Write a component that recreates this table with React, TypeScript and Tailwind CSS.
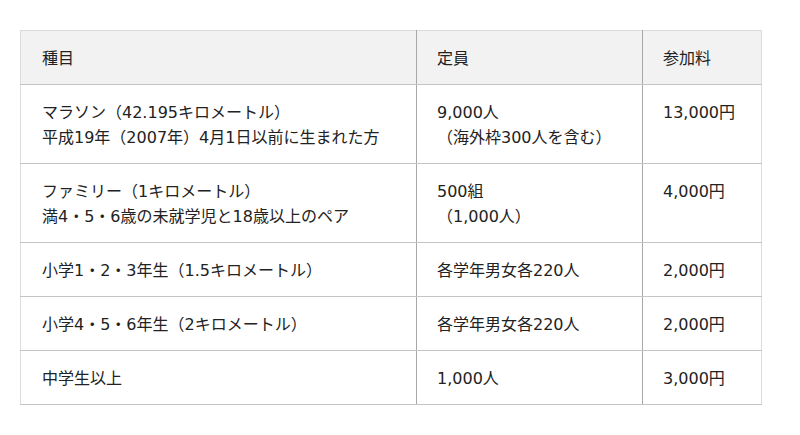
const rows = [
  {
    type: ["マラソン（42.195キロメートル）", "平成19年（2007年）4月1日以前に生まれた方"],
    cap: ["9,000人", "（海外枠300人を含む）"],
    fee: "13,000円",
  },
  {
    type: ["ファミリー（1キロメートル）", "満4・5・6歳の未就学児と18歳以上のペア"],
    cap: ["500組", "（1,000人）"],
    fee: "4,000円",
  },
  { type: ["小学1・2・3年生（1.5キロメートル）"], cap: ["各学年男女各220人"], fee: "2,000円" },
  { type: ["小学4・5・6年生（2キロメートル）"], cap: ["各学年男女各220人"], fee: "2,000円" },
  { type: ["中学生以上"], cap: ["1,000人"], fee: "3,000円" },
];

export default function App() {
  return (
    <div
      className="min-h-[435px] bg-white pt-[30px] pl-[20px] text-[16px] leading-[25px] text-[#222]"
      style={{ fontFamily: '"DejaVu Sans", "Noto Sans CJK JP", sans-serif' }}
    >
      <table className="w-[742px] table-fixed border-collapse border border-[#dcdcdc]">
        <colgroup>
          <col className="w-[396px]" />
          <col className="w-[226px]" />
          <col />
        </colgroup>
        <thead>
          <tr className="bg-[#f2f2f2]">
            <th className="border-b border-[#c4c4c4] px-[21px] pt-[15px] pb-[13px] text-left font-normal">種目</th>
            <th className="border-b border-l border-[#c4c4c4] border-l-[#a8a8a8] px-[20px] pt-[15px] pb-[13px] text-left font-normal">定員</th>
            <th className="border-b border-l border-[#c4c4c4] border-l-[#a8a8a8] px-[20px] pt-[15px] pb-[13px] text-left font-normal">参加料</th>
          </tr>
        </thead>
        <tbody>
          {rows.map((r, i) => (
            <tr key={i} className="align-top">
              <td className="border-b border-[#c4c4c4] px-[21px] pt-[15px] pb-[13px]">
                {r.type.map((t) => (
                  <div key={t}>{t}</div>
                ))}
              </td>
              <td className="border-b border-l border-[#c4c4c4] border-l-[#a8a8a8] px-[20px] pt-[15px] pb-[13px]">
                {r.cap.map((t) => (
                  <div key={t}>{t}</div>
                ))}
              </td>
              <td className="border-b border-l border-[#c4c4c4] border-l-[#a8a8a8] px-[20px] pt-[15px] pb-[13px]">{r.fee}</td>
            </tr>
          ))}
        </tbody>
      </table>
    </div>
  );
}
